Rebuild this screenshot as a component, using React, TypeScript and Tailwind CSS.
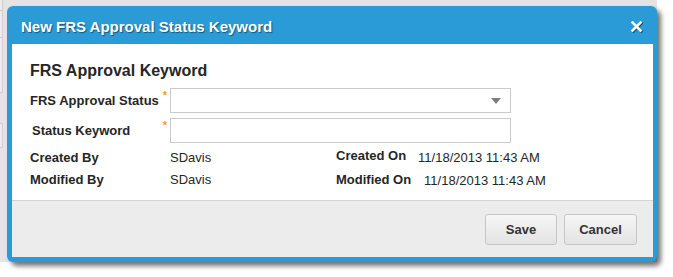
export default function App() {
  const font = { fontFamily: '"Liberation Sans", Arial, sans-serif' };
  return (
    <div className="w-[673px] h-[277px] bg-white" style={font}>
      <div className="flex w-[657px] h-[262px] bg-[#e4e4e4]">
        {/* background page remnants */}
        <div className="flex flex-col w-[7px] shrink-0">
          <div className="w-[3px] h-[10px] bg-[#ececec] border-r border-[#cfcfcf]" />
          <div className="w-[3px] h-[27px] bg-[#ececec] border-r border-t border-[#cfcfcf]" />
          <div className="w-[3px] h-[56px] bg-[#ececec] border-r border-t border-b border-[#cfcfcf]" />
          <div className="h-[30px]" />
          <div className="w-[3px] h-[25px] bg-[#ececec] border-r border-t border-b border-[#cfcfcf]" />
        </div>
        <div className="flex flex-col mt-[6px] w-[650px] h-[256px] bg-[#2a9bd7] rounded-[6px] shadow-[4px_4px_5px_rgba(0,0,0,0.55)]">
          {/* header */}
          <div className="flex items-center justify-between h-[38px] pl-[14px] pr-[15px] shrink-0">
            <div
              className="text-white font-bold text-[15px] leading-[17px] pt-[2px]"
              style={{ textShadow: '1px 1px 1px rgba(0,0,0,0.45)' }}
            >
              New FRS Approval Status Keyword
            </div>
            <svg
              width="11"
              height="11"
              viewBox="0 0 11 11"
              className="mt-[2px]"
              style={{ filter: 'drop-shadow(1px 1px 0.5px rgba(0,0,0,0.45))' }}
            >
              <path d="M1.5 1.5 L9.5 9.5 M9.5 1.5 L1.5 9.5" stroke="white" strokeWidth="2.6" strokeLinecap="square" />
            </svg>
          </div>
          {/* body */}
          <div className="flex flex-col flex-1 ml-[5px] mr-[4px] mb-[5px] bg-white">
            <div className="flex flex-col h-[156px] pl-[18px] text-[#262626]">
              <div className="mt-[18px] font-bold text-[16px] leading-[18px]">FRS Approval Keyword</div>
              <div className="flex mt-[8px] h-[25px]">
                <div className="flex w-[140px] h-[25px]">
                  <div className="flex-1 self-center font-bold text-[13px] leading-[15px]">FRS Approval Status</div>
                  <div className="self-start mt-[2px] mr-[3px] text-[#f29a1e] font-bold text-[11px] leading-[10px]">*</div>
                </div>
                <div className="relative w-[341px] h-[25px] border border-[#cacaca] bg-white">
                  <svg width="10" height="6" viewBox="0 0 10 6" className="absolute right-[9px] top-[9px]">
                    <path d="M0 0 L10 0 L5 6 Z" fill="#7d7d7d" />
                  </svg>
                </div>
              </div>
              <div className="flex mt-[5px] h-[25px]">
                <div className="flex w-[140px] h-[25px]">
                  <div className="flex-1 self-center pl-[2px] font-bold text-[13px] leading-[15px]">Status Keyword</div>
                  <div className="self-start mt-[2px] mr-[3px] text-[#f29a1e] font-bold text-[11px] leading-[10px]">*</div>
                </div>
                <div className="w-[341px] h-[25px] border border-[#cacaca] bg-white" />
              </div>
              <div className="flex mt-[5px]">
                <div className="flex flex-col w-[306px] pt-[2px] gap-[7px]">
                  <div className="flex text-[13px] leading-[15px]">
                    <div className="w-[140px] font-bold">Created By</div>
                    <div>SDavis</div>
                  </div>
                  <div className="flex text-[13px] leading-[15px]">
                    <div className="w-[140px] font-bold">Modified By</div>
                    <div>SDavis</div>
                  </div>
                </div>
                <div className="flex flex-col gap-[7px]">
                  <div className="flex text-[13px] leading-[15px]">
                    <div className="font-bold">Created On</div>
                    <div className="ml-[12px] mt-[2px]">11/18/2013 11:43 AM</div>
                  </div>
                  <div className="flex text-[13px] leading-[15px]">
                    <div className="font-bold">Modified On</div>
                    <div className="ml-[13px] mt-[1px]">11/18/2013 11:43 AM</div>
                  </div>
                </div>
              </div>
            </div>
            {/* footer */}
            <div className="flex flex-1 items-center justify-end gap-[7px] pr-[16px] bg-[#ececec] border-t border-[#d4d4d4]">
              <button className="w-[72px] h-[31px] rounded-[3px] border border-[#c6c6c6] bg-gradient-to-b from-[#f6f6f6] to-[#e3e3e3] text-[#333] font-bold text-[13px] leading-[15px]">
                Save
              </button>
              <button className="w-[73px] h-[31px] rounded-[3px] border border-[#c6c6c6] bg-gradient-to-b from-[#f6f6f6] to-[#e3e3e3] text-[#333] font-bold text-[13px] leading-[15px]">
                Cancel
              </button>
            </div>
          </div>
        </div>
      </div>
    </div>
  );
}
